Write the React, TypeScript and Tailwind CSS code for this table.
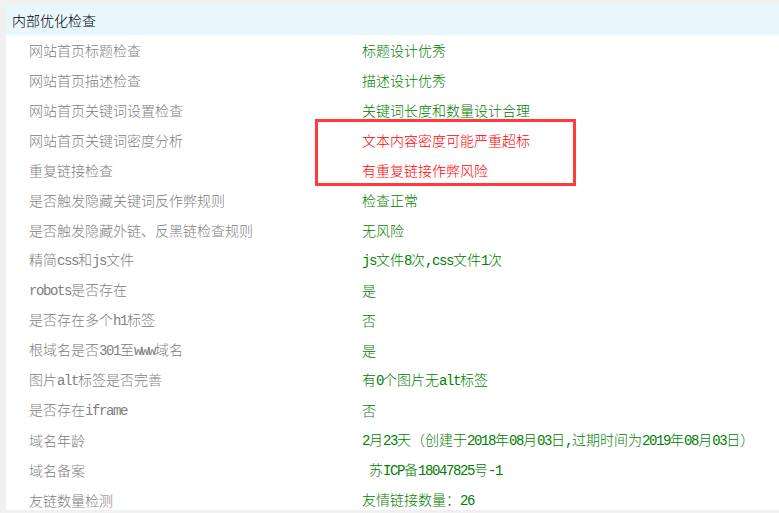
import React from "react";

type Row = { label: string; value: string; red?: boolean };

const rows: Row[] = [
  { label: "网站首页标题检查", value: "标题设计优秀" },
  { label: "网站首页描述检查", value: "描述设计优秀" },
  { label: "网站首页关键词设置检查", value: "关键词长度和数量设计合理" },
  { label: "网站首页关键词密度分析", value: "文本内容密度可能严重超标", red: true },
  { label: "重复链接检查", value: "有重复链接作弊风险", red: true },
  { label: "是否触发隐藏关键词反作弊规则", value: "检查正常" },
  { label: "是否触发隐藏外链、反黑链检查规则", value: "无风险" },
  { label: "精简css和js文件", value: "js文件8次,css文件1次" },
  { label: "robots是否存在", value: "是" },
  { label: "是否存在多个h1标签", value: "否" },
  { label: "根域名是否301至www域名", value: "是" },
  { label: "图片alt标签是否完善", value: "有0个图片无alt标签" },
  { label: "是否存在iframe", value: "否" },
  { label: "域名年龄", value: "2月23天（创建于2018年08月03日,过期时间为2019年08月03日）" },
  { label: "域名备案", value: " 苏ICP备18047825号-1" },
  { label: "友链数量检测", value: "友情链接数量：26" },
];

function Mixed({ text }: { text: string }) {
  const parts = text.split(/([\x20-\x7E]+)/).filter((p) => p.length > 0);
  return (
    <>
      {parts.map((p, i) =>
        /^[\x20-\x7E]+$/.test(p) ? (
          <span
            key={i}
            className="text-[14px] tracking-[-1.4px] whitespace-pre font-normal"
            style={{ fontFamily: '"Liberation Mono", monospace' }}
          >
            {p}
          </span>
        ) : (
          <span key={i}>{p}</span>
        )
      )}
    </>
  );
}

function RowView({ row }: { row: Row }) {
  return (
    <div className="flex h-[30px] items-center">
      <div className="w-[356px] shrink-0 pl-[23px] text-[#808080]">
        <Mixed text={row.label} />
      </div>
      <div className={row.red ? "text-[#ff0000] whitespace-nowrap" : "text-[#008000] whitespace-nowrap"}>
        <Mixed text={row.value} />
      </div>
    </div>
  );
}

export default function App() {
  const before = rows.slice(0, 3);
  const redRows = rows.slice(3, 5);
  const after = rows.slice(5);
  return (
    <div
      className="h-[513px] w-[779px] overflow-hidden bg-[#f0f0f0] pl-[6px] pt-[5px] text-[14px] leading-[16px] font-light"
      style={{ fontFamily: '"Noto Sans CJK SC", "Liberation Sans", sans-serif' }}
    >
      <div className="h-[505px] overflow-hidden bg-white">
        <div className="flex h-[30px] items-center bg-[#e8f6fe] pl-[6px] text-black">内部优化检查</div>
        {before.map((r, i) => (
          <RowView key={i} row={r} />
        ))}
        <div className="relative">
          {redRows.map((r, i) => (
            <RowView key={i} row={r} />
          ))}
          <div className="pointer-events-none absolute left-[309px] top-[-6px] h-[67px] w-[261px] border-[3px] border-[#ff3c3c]" />
        </div>
        {after.map((r, i) => (
          <RowView key={i} row={r} />
        ))}
      </div>
    </div>
  );
}
